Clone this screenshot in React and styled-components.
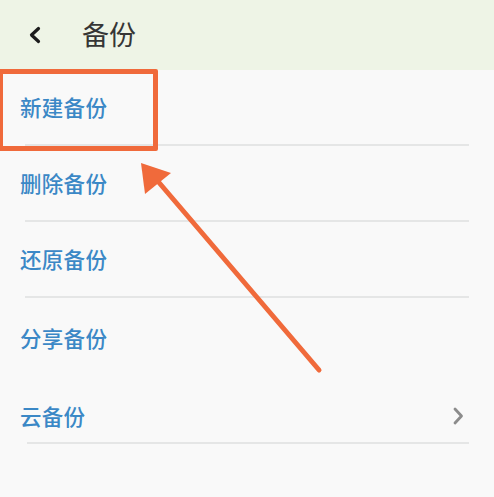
import React from "react";
import styled, { createGlobalStyle } from "styled-components";

const Global = createGlobalStyle`
  html, body { margin: 0; padding: 0; background: #f9f9f9; }
  body { font-family: "Noto Sans CJK SC", "Noto Sans", sans-serif; }
`;

const Page = styled.div`
  position: relative;
  width: 494px;
  height: 497px;
  background: #f9f9f9;
  overflow: hidden;
`;

const Header = styled.header`
  height: 70px;
  background: #eef4e6;
  display: flex;
  align-items: center;
  padding-left: 28px;
  gap: 40px;
  box-sizing: border-box;
`;

const Title = styled.h1`
  margin: 0;
  font-size: 27px;
  font-weight: 400;
  color: #363636;
  line-height: 1;
  margin-top: -4px;
`;

const List = styled.div`
  display: flex;
  flex-direction: column;
`;

const Row = styled.div`
  height: ${(p) => p.$h}px;
  padding-top: ${(p) => p.$pt || 0}px;
  box-sizing: border-box;
  display: flex;
  align-items: center;
  justify-content: space-between;
  padding-left: 20px;
  padding-right: 30px;
`;

const Label = styled.span`
  font-size: 21.5px;
  font-weight: 500;
  color: #3b88c6;
  line-height: 1;
  letter-spacing: 0.3px;
`;

const Divider = styled.div`
  height: 2px;
  margin: 0 25px 0 ${(p) => p.$left || 25}px;
  background: #e5e6e6;
`;

const Highlight = styled.div`
  position: absolute;
  left: -2px;
  top: 69px;
  width: 150px;
  height: 72px;
  border: 5px solid #f06a3b;
  border-radius: 2px;
`;

const ArrowLayer = styled.svg`
  position: absolute;
  left: 0;
  top: 0;
  pointer-events: none;
`;

const items = [
  { label: "新建备份", h: 74, divider: true },
  { label: "删除备份", h: 74, divider: true },
  { label: "还原备份", h: 74, divider: true },
  { label: "分享备份", h: 80, divider: false },
  { label: "云备份", h: 64, pt: 12, divider: true, chevron: true, left: 27 },
];

export default function App() {
  return (
    <Page>
      <Global />
      <Header>
        <svg width="14" height="18" viewBox="0 0 14 18">
          <path d="M10.5 2.5 L3.5 9 L10.5 15.5" fill="none" stroke="#1c1c1c" strokeWidth="3.2" strokeLinecap="round" strokeLinejoin="round" />
        </svg>
        <Title>备份</Title>
      </Header>
      <List>
        {items.map((it) => (
          <React.Fragment key={it.label}>
            <Row $h={it.h} $pt={it.pt}>
              <Label>{it.label}</Label>
              {it.chevron && (
                <svg width="12" height="20" viewBox="0 0 12 20">
                  <path d="M3 3 L9.5 10 L3 17" fill="none" stroke="#8c8c8c" strokeWidth="2.8" strokeLinecap="round" strokeLinejoin="round" />
                </svg>
              )}
            </Row>
            {it.divider && <Divider $left={it.left} />}
          </React.Fragment>
        ))}
      </List>
      <Highlight />
      <ArrowLayer width="494" height="497" viewBox="0 0 494 497">
        <line x1="319" y1="370" x2="150" y2="172" stroke="#f06a3b" strokeWidth="5" strokeLinecap="round" />
        <path d="M141 163 L171 173 L145 194 Z" fill="#f06a3b" />
      </ArrowLayer>
    </Page>
  );
}
